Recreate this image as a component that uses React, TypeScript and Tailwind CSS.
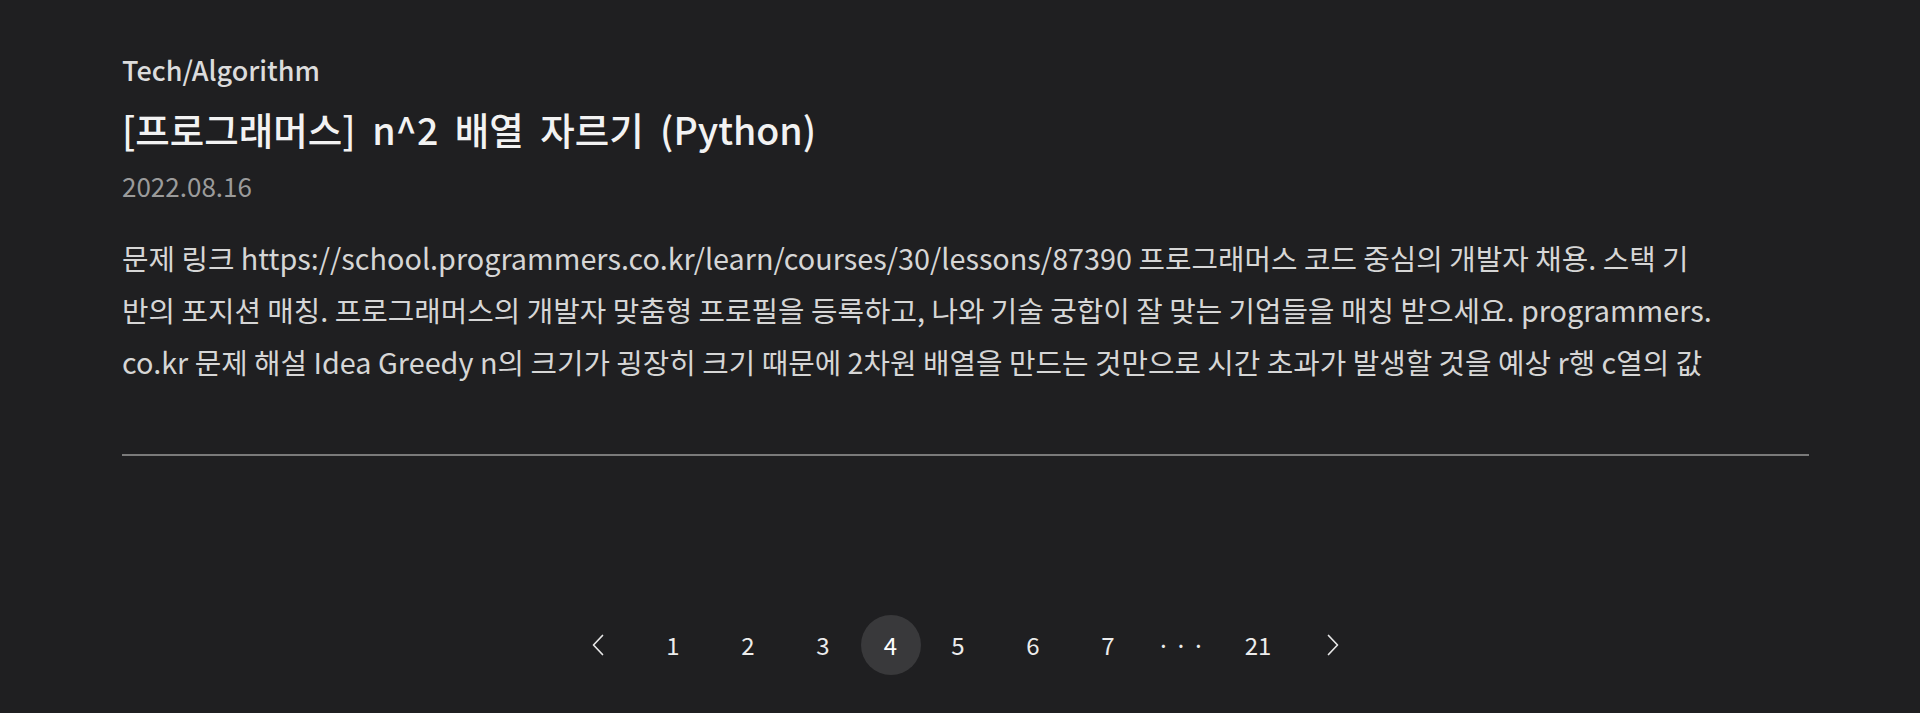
import React from "react";

const pages: { label: string; active?: boolean }[] = [
  { label: "1" },
  { label: "2" },
  { label: "3" },
  { label: "4", active: true },
  { label: "5" },
  { label: "6" },
  { label: "7" },
];

function Chevron({ dir }: { dir: "left" | "right" }) {
  return (
    <svg width="14" height="22" viewBox="0 0 14 22" fill="none" stroke="#e6e6e6" strokeWidth="1.7" strokeLinecap="round" strokeLinejoin="round">
      {dir === "left" ? <path d="M11.5 1.5 L2.5 11 L11.5 20.5" /> : <path d="M2.5 1.5 L11.5 11 L2.5 20.5" />}
    </svg>
  );
}

export default function App() {
  return (
    <div className="min-h-screen w-full bg-[#1f1f21] font-['Noto_Sans_CJK_KR','Noto_Sans',sans-serif]">
      <div className="ml-[122px] w-[1687px] pt-[50px] pb-[40px]">
        <article>
          <div className="text-[27px] leading-[40px] font-medium text-[#dcdcdc]">Tech/Algorithm</div>
          <h2 className="mt-[14px] text-[37.5px] leading-[50px] font-medium text-[#f2f2f2] [word-spacing:8px]">
            [프로그래머스] n^2 배열 자르기 (Python)
          </h2>
          <div className="mt-[14px] text-[26px] leading-[36px] text-[#9b9b9b]">2022.08.16</div>
          <p className="mt-[28px] text-[28.8px] leading-[52px] text-[#d6d6d6] whitespace-nowrap">
            문제 링크 https://school.programmers.co.kr/learn/courses/30/lessons/87390 프로그래머스 코드 중심의 개발자 채용. 스택 기
            <br />
            반의 포지션 매칭. 프로그래머스의 개발자 맞춤형 프로필을 등록하고, 나와 기술 궁합이 잘 맞는 기업들을 매칭 받으세요. programmers.
            <br />
            co.kr 문제 해설 Idea Greedy n의 크기가 굉장히 크기 때문에 2차원 배열을 만드는 것만으로 시간 초과가 발생할 것을 예상 r행 c열의 값
          </p>
        </article>
        <div className="mt-[66px] h-[2px] w-full bg-[#7a7a7a]" />
        <nav className="mt-[159px] flex items-center justify-center text-[24px] text-[#ececec]">
          <button className="flex h-[60px] w-[75px] items-center justify-center">
            <Chevron dir="left" />
          </button>
          {pages.map((p) =>
            p.active ? (
              <span key={p.label} className="flex h-[60px] w-[60px] items-center justify-center rounded-full bg-[#39393b] text-white">
                {p.label}
              </span>
            ) : (
              <span key={p.label} className="flex h-[60px] w-[75px] items-center justify-center">
                {p.label}
              </span>
            )
          )}
          <span className="flex h-[60px] w-[75px] items-center justify-center tracking-[4px]">···</span>
          <span className="flex h-[60px] w-[75px] items-center justify-center">21</span>
          <button className="flex h-[60px] w-[75px] items-center justify-center">
            <Chevron dir="right" />
          </button>
        </nav>
      </div>
    </div>
  );
}
